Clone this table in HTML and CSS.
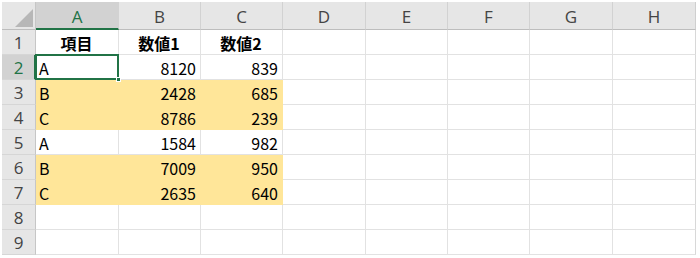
FILE: index.html
```html
<!DOCTYPE html>
<html lang="ja">
<head>
<meta charset="utf-8">
<link rel="stylesheet" href="styles.css">
</head>
<body>
<div class="sheet">
  <div class="hd corner"><span class="tri"></span></div>
  <div class="hd col sel">A</div>
  <div class="hd col">B</div>
  <div class="hd col">C</div>
  <div class="hd col">D</div>
  <div class="hd col">E</div>
  <div class="hd col">F</div>
  <div class="hd col">G</div>
  <div class="hd col last">H</div>

  <div class="hd row">1</div>
  <div class="c b ctr">項目</div><div class="c b ctr">数値1</div><div class="c b ctr">数値2</div>
  <div class="c"></div><div class="c"></div><div class="c"></div><div class="c"></div><div class="c last"></div>

  <div class="hd row rsel">2</div>
  <div class="c active">A</div><div class="c num">8120</div><div class="c num">839</div>
  <div class="c"></div><div class="c"></div><div class="c"></div><div class="c"></div><div class="c last"></div>

  <div class="hd row">3</div>
  <div class="c y">B</div><div class="c y num">2428</div><div class="c y num">685</div>
  <div class="c"></div><div class="c"></div><div class="c"></div><div class="c"></div><div class="c last"></div>

  <div class="hd row">4</div>
  <div class="c y">C</div><div class="c y num">8786</div><div class="c y num">239</div>
  <div class="c"></div><div class="c"></div><div class="c"></div><div class="c"></div><div class="c last"></div>

  <div class="hd row">5</div>
  <div class="c">A</div><div class="c num">1584</div><div class="c num">982</div>
  <div class="c"></div><div class="c"></div><div class="c"></div><div class="c"></div><div class="c last"></div>

  <div class="hd row">6</div>
  <div class="c y">B</div><div class="c y num">7009</div><div class="c y num">950</div>
  <div class="c"></div><div class="c"></div><div class="c"></div><div class="c"></div><div class="c last"></div>

  <div class="hd row">7</div>
  <div class="c y">C</div><div class="c y num">2635</div><div class="c y num">640</div>
  <div class="c"></div><div class="c"></div><div class="c"></div><div class="c"></div><div class="c last"></div>

  <div class="hd row">8</div>
  <div class="c"></div><div class="c"></div><div class="c"></div>
  <div class="c"></div><div class="c"></div><div class="c"></div><div class="c"></div><div class="c last"></div>

  <div class="hd row">9</div>
  <div class="c"></div><div class="c"></div><div class="c"></div>
  <div class="c"></div><div class="c"></div><div class="c"></div><div class="c"></div><div class="c last"></div>
</div>
</body>
</html>
```

FILE: styles.css
```css
html, body {
  margin: 0;
  padding: 0;
  background: #ffffff;
}

.sheet {
  margin: 2px 0 0 2px;
  width: 694px;
  display: grid;
  grid-template-columns: 34px 83px 82px 82px 83px 82px 82px 83px 83px;
  grid-template-rows: 28px repeat(9, 25px);
  font-family: "Noto Sans CJK JP", "Noto Sans", sans-serif;
  font-size: 16px;
  color: #000;
}

.hd {
  box-sizing: border-box;
  background: #e6e6e6;
  color: #444444;
  font-family: "Open Sans", "Noto Sans", sans-serif;
  font-size: 17px;
  display: flex;
  align-items: center;
  justify-content: center;
}

.corner {
  border-right: 1px solid #c6c6c6;
  border-bottom: 1px solid #bdbdbd;
  align-items: flex-end;
  justify-content: flex-end;
  padding: 0 2px 2px 0;
}

.tri {
  width: 0;
  height: 0;
  border-left: 18px solid transparent;
  border-bottom: 18px solid #b7b7b7;
}

.col {
  border-right: 1px solid #d2d2d2;
  border-bottom: 1px solid #bdbdbd;
  padding-top: 1px;
}

.col.last {
  border-right: 1px solid #cfcfcf;
}

.col.sel {
  background: #d2d2d2;
  color: #217346;
  border-bottom: 2px solid #217346;
  padding-top: 2px;
}

.row {
  border-right: 1px solid #c6c6c6;
  border-bottom: 1px solid #d6d6d6;
}

.row.rsel {
  background: #d2d2d2;
  color: #217346;
  border-right: 2px solid #217346;
  padding-left: 1px;
}

.c {
  box-sizing: border-box;
  border-right: 1px solid #e2e2e2;
  border-bottom: 1px solid #e2e2e2;
  display: flex;
  align-items: center;
  padding: 1px 4px 0 3px;
  white-space: nowrap;
}

.c.last {
  border-right-color: #d8d8d8;
}

.ctr {
  justify-content: center;
}

.b {
  font-weight: bold;
}

.num {
  justify-content: flex-end;
}

.y {
  background: #ffe699;
  border-right-color: #ffe699;
  border-bottom-color: #ffe699;
}

.active {
  position: relative;
}

.active::after {
  content: "";
  position: absolute;
  left: -1px;
  top: -1px;
  right: -1px;
  bottom: -1px;
  border: 2px solid #217346;
  pointer-events: none;
}

.active::before {
  content: "";
  position: absolute;
  right: -3px;
  bottom: -3px;
  width: 5px;
  height: 5px;
  background: #217346;
  border: 1px solid #ffffff;
  box-sizing: border-box;
  z-index: 2;
}
```
